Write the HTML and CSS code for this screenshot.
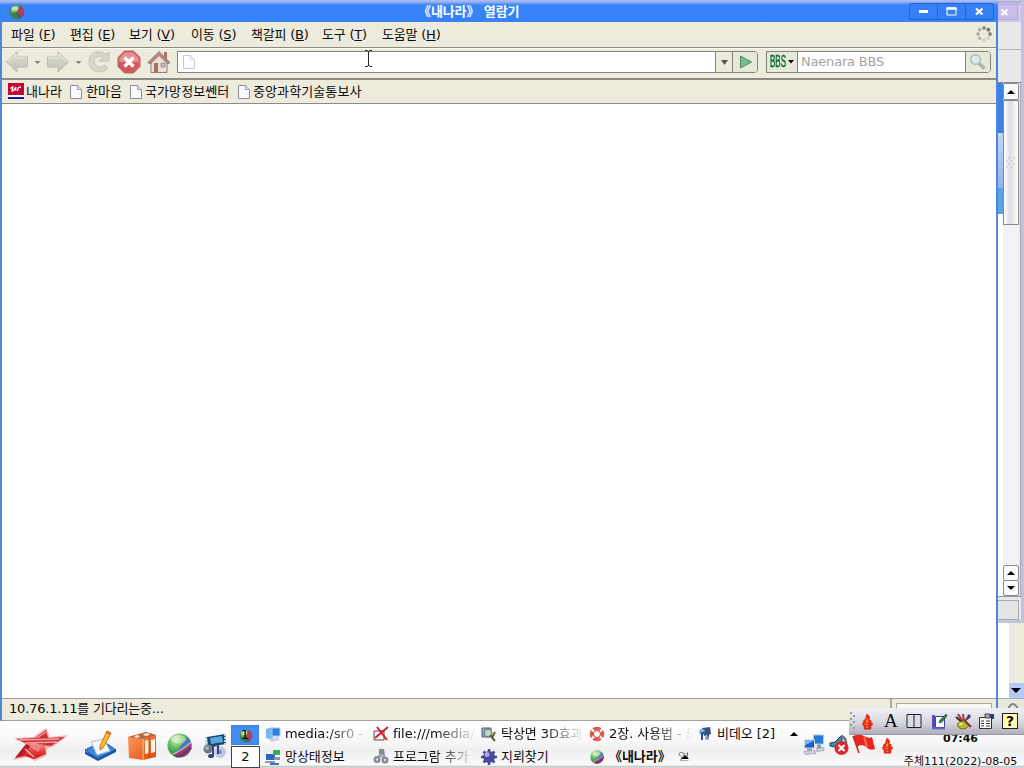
FILE: index.html
```html
<!DOCTYPE html>
<html lang="ko">
<head>
<meta charset="utf-8">
<title>《내나라》 열람기</title>
<link rel="stylesheet" href="styles.css">
</head>
<body>
<svg class="defs" width="0" height="0">
  <defs>
    <radialGradient id="gGreen" cx=".35" cy=".25" r=".8"><stop offset="0" stop-color="#c8f0b0"/><stop offset=".5" stop-color="#58b458"/><stop offset="1" stop-color="#206840"/></radialGradient>
    <linearGradient id="gRed" x1="0" y1="0" x2="0" y2="1"><stop offset="0" stop-color="#f4a0a0"/><stop offset=".5" stop-color="#e04040"/><stop offset="1" stop-color="#d01010"/></linearGradient>
    <linearGradient id="gOrange" x1="0" y1="0" x2="1" y2="1"><stop offset="0" stop-color="#ffa060"/><stop offset="1" stop-color="#e04808"/></linearGradient>
    <linearGradient id="gGrey" x1="0" y1="0" x2="0" y2="1"><stop offset="0" stop-color="#dcdcd0"/><stop offset="1" stop-color="#c0c0b4"/></linearGradient>
    <symbol id="globe" viewBox="0 0 24 24">
      <circle cx="12" cy="12" r="11.500" fill="url(#gGreen)"/>
      <path d="M12 14L20 4A11.500 11.500 0 0 1 23.500 11L8 22z" fill="#5078c0"/>
      <path d="M6 21.500Q14 17 23.500 10Q24 20 15 23Q10 24 6 21.500z" fill="#b03858"/>
      <path d="M5 20.500Q14 17 23 9" stroke="#c8c8e8" stroke-width="1" fill="none"/>
      <path d="M9 23Q17 20 23.500 14" stroke="#384088" stroke-width="1.500" fill="none"/>
      <ellipse cx="11" cy="6" rx="7" ry="4" fill="#fff" opacity=".4"/>
    </symbol>
    <symbol id="globe-small" viewBox="0 0 16 16">
      <circle cx="8" cy="8" r="7.300" fill="#3c8048"/>
      <path d="M8 8L12 2A7.300 7.300 0 0 1 12 14z" fill="#c03858"/>
      <path d="M8 8L9 15L13 13z" fill="#505878"/>
      <path d="M2 5Q5 0 10 1.500L8 8L2 9z" fill="#68b468"/>
      <ellipse cx="6" cy="4.500" rx="3.500" ry="2.300" fill="#fff" opacity=".55"/>
    </symbol>
    <symbol id="page" viewBox="0 0 12 14">
      <path d="M.5.5H7.500L11.500 4.500V13.500H.5z" fill="#fafaff" stroke="#8c8c94"/>
      <path d="M7.500.5V4.500H11.500" fill="#e0e0ea" stroke="#a4a4ae"/>
    </symbol>
    <symbol id="pc" viewBox="0 0 22 22">
      <path d="M10 1h11v10H10z" fill="#b8c8d8"/><path d="M11 2h9v8h-9z" fill="#2878d8"/>
      <path d="M1 6h11v9H1z" fill="#c8d4e0"/><path d="M2 7h9v7H2z" fill="#1860c8"/><path d="M2 7h9L2 12z" fill="#78b8f8"/>
      <path d="M4 15h5v2H4zM14 11h4v4h-4z" fill="#8898a8"/><path d="M1 18l11-1 1 3-11 1zM13 15l8-1v3l-7 1z" fill="#d0d4dc" stroke="#8890a0" stroke-width=".6"/>
    </symbol>
    <symbol id="torch" viewBox="0 0 14 18">
      <path d="M6 0C9 3 11 4 9 7C12 7 12 10 11 12H3C1 9 3 7 5 6C4 4 6 3 6 0z" fill="#e83018"/>
      <path d="M7 5C8 7 7 8 8 10H5C5 8 7 7 7 5z" fill="#ff9820"/>
      <path d="M1 11H13L12 13.500H11V17.500H3V13.500H2z" fill="#dc2818"/><path d="M4 12H8M5 15H8" stroke="#ffa060"/>
    </symbol>
  </defs>
</svg>

<div class="desktop">
  <div class="rear-window">
    <div class="rear-body"></div>
    <div class="rear-scroll"><svg width="15" height="15"><path d="M2 5h10l-5 5z"/></svg></div>
    <div class="rear-status"><svg width="12" height="10"><path d="M2 9V5Q6-1 10 5V9" fill="none" stroke="#888" stroke-width="2"/></svg></div>
  </div>

  <div class="back-window">
    <div class="back-title"><svg width="15" height="15"><path d="M4.500 4.500l6 5.500M10.500 4.500l-6 5.500" stroke="#fff" stroke-width="2"/></svg></div>
    <div class="back-menu"></div>
    <div class="back-tools"></div>
    <div class="back-content">
      <div class="back-view"><i class="sky"></i><i class="haze"></i><i class="sea"></i></div>
      <div class="scrollbar">
        <div class="sb-btn"><svg width="14" height="15"><path d="M3 10h8l-4-4z"/></svg></div>
        <div class="sb-thumb"><svg width="10" height="14"><path d="M2 1h2M7 1h2M0 4h2M5 4h2M2 7h2M7 7h2M0 10h2M5 10h2" stroke="#c0c0c4"/></svg></div>
        <div class="sb-track"></div>
        <div class="sb-btn"><svg width="14" height="15"><path d="M3 9h8l-4-4z"/></svg></div>
        <div class="sb-btn"><svg width="14" height="15"><path d="M3 5h8l-4 4z"/></svg></div>
      </div>
    </div>
    <div class="back-status"><span></span></div>
  </div>

  <div class="window">
    <div class="titlebar">
      <svg class="title-icon" width="16" height="16"><use href="#globe-small"/></svg>
      <div class="title">《내나라》 열람기</div>
      <div class="win-buttons">
        <span><svg width="27" height="15"><path d="M9 7.500h9" stroke="#fff" stroke-width="3"/></svg></span>
        <span><svg width="27" height="15"><path d="M9 4h9v7H9z" fill="none" stroke="#fff"/><path d="M8.500 4.500h10" stroke="#fff" stroke-width="2.500"/></svg></span>
        <span><svg width="27" height="15"><path d="M10 4.500l6.500 6M16.500 4.500l-6.500 6" stroke="#fff" stroke-width="2.200"/></svg></span>
      </div>
    </div>

    <div class="menubar">
      <span class="m1">파일 (<u>F</u>)</span><span class="m2">편집 (<u>E</u>)</span><span class="m3">보기 (<u>V</u>)</span><span class="m4">이동 (<u>S</u>)</span><span class="m5">책갈피 (<u>B</u>)</span><span class="m6">도구 (<u>T</u>)</span><span class="m7">도움말 (<u>H</u>)</span>
      <svg class="throbber" width="18" height="18" fill="#a8a89c"><circle cx="9" cy="3" r="1.900" fill="#8c8c80"/><circle cx="13.300" cy="4.700" r="1.900" fill="#76766a"/><circle cx="15" cy="9" r="1.900" fill="#88887c"/><circle cx="13.300" cy="13.300" r="1.700" fill="#d0d0c4"/><circle cx="9" cy="15" r="1.700" fill="#ccccc0"/><circle cx="4.700" cy="13.300" r="1.700" fill="#b4b4a8"/><circle cx="3" cy="9" r="1.700"/><circle cx="4.700" cy="4.700" r="1.700"/></svg>
    </div>

    <div class="toolbar">
      <svg class="ic-back" width="24" height="24"><path d="M1.500 12L12 2V7H22.500V17H12V22z" fill="url(#gGrey)" stroke="#bcbcb0"/><path d="M3 12l8-8v4h10" fill="none" stroke="#eeeee4"/></svg>
      <svg class="caret" width="7" height="5"><path d="M.5 1h6l-3 3z" fill="#84847a"/></svg>
      <svg class="ic-fwd" width="24" height="24"><path d="M22.500 12L12 2V7H1.500V17H12V22z" fill="url(#gGrey)" stroke="#bcbcb0"/><path d="M2 8h11V4l8 8" fill="none" stroke="#eeeee4"/></svg>
      <svg class="caret" width="7" height="5"><path d="M.5 1h6l-3 3z" fill="#84847a"/></svg>
      <svg class="ic-reload" width="24" height="24"><path d="M22 2V11H12L16 7.500C10 4 4 11 9 15Q13 19 18 15L21 18C15 25 2 22 2 12C2 2 13-1 19 4.500z" fill="#d6d6ca" stroke="#c4c4b8"/></svg>
      <svg class="ic-stop" width="24" height="24"><path d="M7.500 1h9L23 7.500v9L16.500 23h-9L1 16.500v-9z" fill="#d4585c" stroke="#a87070"/><path d="M8 2.500h8L21.500 8v4H2.500V8z" fill="#e89090"/><path d="M7.500 7.500l9 9M16.500 7.500l-9 9" stroke="#fff" stroke-width="3.500"/></svg>
      <svg class="ic-home" width="24" height="24"><path d="M17 2h3v8h-3z" fill="#b07068"/><path d="M4 12v10.500h16V12l-8-8z" fill="#f0ddd4" stroke="#948078"/><path d="M1 12.500L12 1.500l11 11-2 1.500-9-8.500L3 14z" fill="#b88c84" stroke="#8c6c64" stroke-width=".8"/><path d="M7 13h4v9.500H7z" fill="#a07468"/><path d="M14 13h4v4h-4z" fill="#b4c0cc" stroke="#948078" stroke-width=".7"/></svg>
      <div class="urlbar">
        <svg class="url-page" width="12" height="14"><use href="#page"/></svg>
        <span class="url-drop"><svg width="9" height="7"><path d="M1 1h7l-3.500 5z" fill="#555"/></svg></span>
        <span class="url-go"><svg width="14" height="14"><path d="M1.500 1L12.500 7L1.500 13z" fill="#78bc90" stroke="#4c8c64"/></svg></span>
      </div>
      <div class="search">
        <span class="engine"><b>BBS</b><svg width="6" height="4"><path d="M0 0h6l-3 3.500z"/></svg></span>
        <span class="query">Naenara BBS</span>
        <span class="find"><svg width="18" height="18"><path d="M10 10l5.500 5.500" stroke="#999" stroke-width="3"/><path d="M10.500 10l5 5" stroke="#e0e0e0"/><circle cx="6.500" cy="6.500" r="4.800" fill="#dce8ec" stroke="#b4b8b8" stroke-width="1.400"/></svg></span>
      </div>
    </div>

    <div class="bookmarks">
      <span class="b1"><svg width="16" height="16"><path d="M0 0h16v12H0z" fill="#c00838"/><path d="M0 12h16v2H0z" fill="#fff"/><path d="M0 14h16v2H0z" fill="#1818a0"/><path d="M2.500 5.500Q4 4 5 4L4 8Q6 8 8 4L7.500 7.500M9 8L11 4Q11 5 13 3.500" fill="none" stroke="#fff" stroke-width="1.300"/></svg>내나라</span>
      <span class="b2"><svg width="12" height="14"><use href="#page"/></svg>한마음</span>
      <span class="b3"><svg width="12" height="14"><use href="#page"/></svg>국가망정보쎈터</span>
      <span class="b4"><svg width="12" height="14"><use href="#page"/></svg>중앙과학기술통보사</span>
    </div>
    <div class="content"></div>
    <div class="statusbar"><span class="status-text">10.76.1.11를 기다리는중...</span><span class="progress"><i></i></span></div>
    <svg class="cursor" width="9" height="19"><path d="M1 1.500h2l1.500 1 1.500-1h2M4.500 2v15M1 17.500h2l1.500-1 1.500 1h2" fill="none" stroke="#222"/></svg>
  </div>

  <div class="panel">
    <svg class="star" width="58" height="34" viewBox="0 0 58 34">
      <path d="M3 10L22 9L35 0L39 9L57 7L43 18L36 21L35 28L24 33L17 29L2 32L12 21L15 16z" fill="#f6b4b0"/>
      <path d="M5 11L24 10L35 2L37 10L54 9L40 18L16 16z" fill="#cc3038"/>
      <path d="M8 12L48 11M14 15L46 14M26 10L35 4" stroke="#f4a0a0" stroke-width="1.300"/>
      <path d="M15 16L4 30L14 28L23 31L35 26L34 18L24 15z" fill="url(#gRed)"/><path d="M15 16L4 30L11 28L20 18z" fill="#b81c28"/><path d="M18 18L32 16L27 24z" fill="#ee8080"/><path d="M14 21L23 29" stroke="#f6b4b0" stroke-width="1.500"/>
    </svg>
    <div class="launch">
      <svg width="34" height="32" viewBox="0 0 34 32"><path d="M2 20L20 11L33 20L15 29z" fill="#3888d8" stroke="#1858a8"/><path d="M2 21v3l13 7 18-9v-3L15 28z" fill="#1858a8"/><path d="M8 12L21 9l6 12-13 4z" fill="#f4f8ff" stroke="#a8bcd8"/><path d="M24 1l4 2-8 15-3 2v-4z" fill="#ffb828" stroke="#c87810"/><path d="M24 1l4 2-1 2-4-2z" fill="#e86048"/></svg>
      <svg width="30" height="30" viewBox="0 0 30 30"><path d="M1 6L19 1l10 3v22L16 29 2 27z" fill="url(#gOrange)"/><path d="M1 6L19 1l10 3-13 4z" fill="#b86848"/><path d="M7 5l4-1 2 2-4 1zM16 3l5-1 2 2-5 1z" fill="#fce8d0"/><path d="M16 8v21" stroke="#ffc090"/><path d="M18 10l4-1v13l-4 1zM24 9l4-1v13l-4 1z" fill="#fff4e8"/><path d="M22 6v21" stroke="#c83808"/></svg>
      <svg width="25" height="25"><use href="#globe"/></svg>
      <svg width="26" height="28" viewBox="0 0 26 28"><path d="M5 5L23 2l1 10-18 3z" fill="#184870"/><path d="M8 6l12-2 1 6-12 2z" fill="#58a8d8"/><path d="M4 5v12M23 2v11" stroke="#b8d4e8" stroke-width="2" stroke-dasharray="2 1"/><circle cx="6" cy="17" r="4.500" fill="#707880"/><circle cx="5" cy="16" r="2" fill="#a8b0b8"/><circle cx="18" cy="20" r="6" fill="#c0c8ec"/><circle cx="18" cy="20" r="2" fill="#8090d0"/><path d="M11 24V14l5-1v9" fill="none" stroke="#384878" stroke-width="2"/><ellipse cx="9" cy="24" rx="3" ry="2" fill="#304878"/></svg>
    </div>
    <div class="pager">
      <span class="on"><svg width="14" height="14"><use href="#globe-small"/></svg><b>1</b></span><span>2</span>
    </div>
    <div class="tasks">
      <div class="task"><svg width="16" height="16"><path d="M1 3l7-2v13l-7-2z" fill="#78b8f0"/><path d="M7 2h8v8H7z" fill="#2880e0" stroke="#b0c8e0"/><path d="M4 13l9-2 2 3-9 2z" fill="#c8d4e4"/></svg><span class="fade">media:/sr0 -</span></div>
      <div class="task"><svg width="16" height="16"><path d="M1 5h10v9H1z" fill="#f4f4f4" stroke="#605050"/><path d="M4 1l10 13M15 1L2 12" stroke="#d81c30" stroke-width="2"/></svg><span class="fade">file:///media/i</span></div>
      <div class="task"><svg width="16" height="16"><path d="M1 2h9v9H1z" fill="#98a8c8" stroke="#506088"/><circle cx="7" cy="7" r="4" fill="#b8d8c8" stroke="#607068"/><path d="M9 9l5 6M14 6l-3 6" stroke="#606820" stroke-width="2"/></svg><span class="fade">탁상면 3D효과</span></div>
      <div class="task"><svg width="16" height="16"><circle cx="8" cy="8" r="5.500" fill="#fff" stroke="#e05850" stroke-width="3.500"/><path d="M2.500 3l3 3M13.500 3l-3 3M2.500 13l3-3M13.500 13l-3-3" stroke="#fff" stroke-width="2"/><circle cx="8" cy="8" r="3.500" fill="#fff" stroke="#b84040"/></svg><span class="fade">2장. 사용법 - 도</span></div>
      <div class="task wide"><svg width="14" height="16"><path d="M4 2l8-1 1 7-7 2z" fill="#285888"/><circle cx="4" cy="6" r="3" fill="#78b8e8"/><path d="M4 14V7l6-1v6" fill="none" stroke="#385078" stroke-width="2"/><circle cx="9" cy="12" r="2" fill="#8098c0"/></svg><span>비데오 [2]</span><svg class="up" width="8" height="4"><path d="M0 4h8L4 0z"/></svg></div>
      <div class="task"><svg width="16" height="16"><path d="M1 5h9v6H1z" fill="#2868c0"/><path d="M8 1h7v5H8z" fill="#38b050"/><path d="M0 12h10v2H0zM9 8h6v3H9z" fill="#8898b0"/><path d="M5 15h9" stroke="#4070b0" stroke-width="2"/></svg><span>망상태정보</span></div>
      <div class="task"><svg width="16" height="16" fill="#848898"><path d="M6 0h5l1 7H6z"/><path d="M3 8l4-3h3l3 4z" fill="#a4a8b4"/><circle cx="4" cy="10.500" r="3.500"/><circle cx="12" cy="11" r="3.500"/><circle cx="4" cy="10.500" r="1.200" fill="#ddd"/><circle cx="12" cy="11" r="1.200" fill="#ddd"/></svg><span class="fade">프로그람 추가</span></div>
      <div class="task"><svg width="16" height="16"><path d="M8 0v16M0 8h16M2.500 2.500l11 11M13.500 2.500l-11 11" stroke="#484888" stroke-width="2.500"/><circle cx="8" cy="8" r="6" fill="#4848a0"/><circle cx="6" cy="5.500" r="2.500" fill="#a8a8e8"/></svg><span>지뢰찾기</span></div>
      <div class="task active"><svg width="16" height="14"><use href="#globe"/></svg><span><b>《내나라》</b></span><span class="cut">열</span><svg class="up2" width="8" height="4"><path d="M0 4h8L4 0z"/></svg></div>
    </div>
    <div class="tray">
      <svg width="22" height="23"><use href="#pc"/></svg>
      <svg width="20" height="24"><path d="M1 10l5-1 7-7v17l-7-5-5-1z" fill="#3890a8" stroke="#184858"/><path d="M12 3q6 2 5 10" fill="none" stroke="#687888" stroke-width="2.500"/><circle cx="12.500" cy="15" r="7" fill="#d82830"/><path d="M9.500 12l6 6M15.500 12l-6 6" stroke="#fff" stroke-width="2"/></svg>
      <svg width="24" height="22"><path d="M1 3Q7 0 12 3T20 4L23 16Q18 18 14 14T5 14z" fill="#ec2420"/><path d="M1 3l6 17" stroke="#c02820" stroke-width="1.500"/><path d="M12 4l3 10" stroke="#ff7060" stroke-width="2"/></svg>
      <svg width="13" height="17"><use href="#torch"/></svg>
    </div>
    <div class="clock"><b>07:46</b><span>주체111(2022)-08-05</span></div>
  </div>

  <div class="ime">
    <svg width="7" height="20" fill="#9898a0"><path d="M1 1h2v2H1zM4 4h2v2H4zM1 7h2v2H1zM4 10h2v2H4zM1 13h2v2H1zM4 16h2v2H4z"/></svg>
    <svg class="i-torch" width="13" height="17"><use href="#torch"/></svg>
    <span class="i-a">A</span>
    <svg class="i-book" width="16" height="16"><path d="M1 1.500h14v13H1zM8 1.500v13" fill="#dcdce6" stroke="#202028"/></svg>
    <svg class="i-note" width="17" height="17"><path d="M1 2h3v13H1z" fill="#5050b8"/><path d="M4.500 3.500h9v11h-9z" fill="#fff" stroke="#4040a8"/><path d="M15 1l-6 6-1 3 3-1 5-6z" fill="#388050" stroke="#203830" stroke-width=".6"/><path d="M1 15.500h13" stroke="#6868d0" stroke-width="2"/></svg>
    <svg class="i-pot" width="17" height="17"><path d="M3 1l5 8M8 1l1 8M15 2L9 9" stroke="#a83838" stroke-width="2"/><path d="M1 4l6 5" stroke="#282828" stroke-width="2"/><ellipse cx="8" cy="12" rx="5.500" ry="4" fill="#b8b830" stroke="#707018"/><path d="M13 1l3 3-4 3" fill="#283898"/><path d="M10 8l6 6" stroke="#883030" stroke-width="2"/><ellipse cx="6" cy="11" rx="2" ry="1" fill="#f0f0a0"/></svg>
    <svg class="i-list" width="17" height="17"><path d="M1.500 4.500h12v11h-12z" fill="#fff" stroke="#303030"/><path d="M3 8h3M8 8h4M3 10.500h3M8 10.500h4M3 13h3M8 13h4" stroke="#303030"/><path d="M7 1h5v4H7z" fill="#aaa" stroke="#404040"/><path d="M12 1h4v5h-2l-2-2z" fill="#284078"/></svg>
    <span class="i-help">?</span>
  </div>
</div>
</body>
</html>
```

FILE: styles.css
```css
* { box-sizing: border-box; }
body { margin: 0; overflow: hidden; font: 13px/16px "DejaVu Sans", "Noto Sans CJK KR", sans-serif; color: #0c0c0c; }
svg { display: block; flex: none; }
.defs { position: absolute; }
.desktop { position: relative; width: 1024px; height: 768px; overflow: hidden; background: #fff; white-space: nowrap; }

.rear-window { position: absolute; left: 998px; top: 0; width: 26px; height: 720px; background: linear-gradient(90deg, #fff 11px, #ecebdc 11px); display: flex; flex-direction: column; }
.rear-body { height: 683px; }
.rear-scroll { height: 15px; margin-left: 11px; background: #b8c8f8; }
.rear-status { flex: 1; border-top: 1px solid #aaa; background: #e8e7dc; padding: 3px 0 0 9px; }

.back-window { position: absolute; left: 900px; top: 0; width: 124px; height: 623px; background: #e8e7ea; border-right: 3px solid #c2c2dc; border-bottom: 3px solid #c4c8dc; display: flex; flex-direction: column; }
.back-title { height: 22px; padding: 3px 0 0 96px; background: linear-gradient(#a8a8d0, #d4ccf0 5px, #cdc3ec); border-top: 1px solid #c8c8e0; }
.back-title svg { width: 22px; height: 16px; border: 1px solid #b4a8dc; border-left: 0; border-radius: 0 2px 2px 0; background: #c9bdec; padding-left: 1px; }
.back-menu { height: 28px; border-bottom: 1px solid #b8b8c0; }
.back-tools { height: 33px; border-bottom: 1px solid #888; }
.back-content { height: 513px; display: flex; padding-left: 98px; border-right: 1px solid #aaa; }
.back-view { width: 5px; background: #fff; display: flex; flex-direction: column; }
.back-view i { display: block; }
.sky { height: 50px; background: #3a84e0; }
.haze { height: 55px; background: linear-gradient(#c0d8f4, #90b4e8); }
.sea { height: 26px; background: #58a4e0; }
.scrollbar { width: 16px; display: flex; flex-direction: column; background: #f2f2f4; }
.sb-btn { height: 16px; border: 1px solid #8c8c90; background: #fbfbfb; border-radius: 2px; flex: none; }
.sb-btn:first-child { height: 17px; }
.sb-thumb { height: 125px; border: 1px solid #888; background: linear-gradient(90deg, #fff, #dedede 6px, #fff); padding: 56px 0 0 2px; }
.sb-track { flex: 1; }
.sb-track + .sb-btn { margin-bottom: -1px; }
.back-status { flex: 1; border-top: 1px solid #999; padding: 3px 2px 0 98px; }
.back-status span { display: block; height: 20px; border: 1px solid #aaa; border-left: 0; background: #e4e3e8; }

.window { position: absolute; left: 0; top: 0; width: 998px; height: 721px; background: #ecebdc; border: solid #4f86dc; border-width: 0 2px 1px; border-bottom-color: #a0a09c; display: flex; flex-direction: column; }
.titlebar { height: 22px; flex: none; margin: 0 -2px; background: linear-gradient(#b8bcec 0, #90b0f4 2px, #3884f8 5px, #3482fc 20px, #4484e4); display: flex; align-items: flex-start; }
.title-icon { margin: 4px 0 0 9px; }
.title { width: 121px; margin: 4px 0 0 394px; color: #fff; font-weight: bold; letter-spacing: -.1px; text-indent: -1px; }
.win-buttons { display: flex; margin: 3px 0 0 369px; border: 1px solid #2464d4; border-radius: 2px; background: #3480f4; }
.win-buttons span { width: 28px; height: 15px; border-right: 1px solid #2464d4; }
.win-buttons span:last-child { border: 0; width: 27px; }
.menubar { height: 26px; flex: none; display: flex; align-items: center; border-bottom: 1px solid #8c8c86; padding: 1px 0 0 9px; }
.menubar span { letter-spacing: -.2px; }
.m1 { width: 59px; } .m2 { width: 59px; } .m3 { width: 62px; } .m4 { width: 60px; } .m5 { width: 71px; } .m6 { width: 60px; } .m7 { width: 60px; }
.throbber { margin-left: auto; margin-right: 3px; margin-top: -2px; }
.toolbar { height: 32px; flex: none; display: flex; align-items: center; border-top: 1px solid #fcfcf4; border-bottom: 2px solid #8c8c86; padding: 0 0 3px 3px; }
.toolbar .caret { margin: 0 5px; }
.ic-reload, .ic-stop, .ic-home { margin-right: 6px; }
.urlbar { width: 581px; height: 22px; flex: none; border: 1px solid #84847e; border-radius: 0 4px 4px 0; background: #fff; display: flex; align-items: center; }
.url-page { margin: 0 auto 0 5px; opacity: .45; }
.url-drop { width: 17px; height: 20px; background: #ecebdc; border-left: 1px solid #84847e; padding: 7px 0 0 4px; }
.url-go { width: 25px; height: 20px; background: #e6e9d8; border-left: 1px solid #84847e; border-radius: 0 3px 3px 0; padding: 3px 0 0 6px; }
.search { width: 225px; height: 22px; flex: none; margin-left: 8px; border: 1px solid #84847e; border-radius: 0 4px 4px 0; background: #fff; display: flex; }
.engine { width: 31px; display: flex; align-items: center; background: #e6e9d8; border-right: 1px solid #84847e; padding-left: 3px; }
.engine b { width: 19px; font: 16px/20px "Liberation Sans", sans-serif; color: #0c6838; -webkit-text-stroke: .5px #0c6838; transform: scaleX(.5); transform-origin: 0 50%; }
.engine svg { margin-left: -1px; }
.query { width: 167px; line-height: 20px; padding-left: 3px; color: #a4a4a4; letter-spacing: -.2px; }
.find { width: 25px; background: #e6e9d8; border-left: 1px solid #84847e; padding: 1px 0 0 3px; border-radius: 0 3px 3px 0; }
.bookmarks { height: 24px; flex: none; display: flex; align-items: center; border-bottom: 1px solid #8c8c86; padding-top: 1px; letter-spacing: .1px; }
.bookmarks span { display: flex; align-items: center; }
.bookmarks svg { margin-top: -1px; }
.b1 { width: 68px; padding-left: 6px; gap: 2px; } .b2 { width: 60px; gap: 4px; } .b3 { width: 108px; gap: 3px; } .b4 { gap: 3px; }
.bookmarks .b1 svg { margin-top: -3px; }
.content { flex: 1; background: #fff; border-bottom: 1px solid #9c9c98; }
.statusbar { height: 21px; flex: none; display: flex; align-items: center; }
.status-text { width: 888px; padding-left: 7px; letter-spacing: -.2px; margin-top: -1px; }
.progress { flex: 1; height: 21px; border-left: 2px solid #a8a89c; padding: 4px 4px 0; }
.progress i { display: block; height: 17px; border: 1px solid #a8a89c; background: #fafaf4; }
.cursor { position: absolute; left: 362px; top: 49px; }

.panel { position: absolute; left: 0; top: 721px; width: 1024px; height: 47px; display: flex; background: linear-gradient(#fff, #f8f8f8 20px, #efefef 28px, #fafafa 44px, #bbb 46px, #eee); }
.star { margin: 7px 14px 0 11px; }
.launch { width: 149px; display: flex; align-items: center; gap: 10px; padding-top: 2px; }
.pager { width: 29px; padding-top: 4px; text-align: center; margin-left: -1px; }
.pager span { position: relative; display: block; height: 22px; border: 1px solid #444; line-height: 20px; background: #fff; }
.pager .on { height: 20px; border-color: #3c80e8; background: #448cf4; margin-bottom: 1px; line-height: 18px; width: 28px; }
.pager .on svg { position: absolute; left: 7px; top: 3px; }
.pager .on b { position: relative; font-weight: normal; }
.tasks { width: 542px; padding: 2px 0 0 5px; display: grid; grid-template-columns: repeat(4, 108px) 105px; grid-template-rows: 22px 23px; }
.task { display: flex; align-items: center; gap: 4px; min-width: 0; }
.task span { letter-spacing: -.05px; }
.task .fade { width: 84px; overflow: hidden; -webkit-mask-image: linear-gradient(90deg, #000 50%, transparent); mask-image: linear-gradient(90deg, #000 50%, transparent); }
.up { margin-left: 10px; }
.wide { padding-left: 1px; gap: 5px; }
.task .cut { width: 13px; height: 16px; opacity: .55; transform: scaleY(.7); margin-left: 3px; }
.up2 { margin-left: -14px; }
.tray { width: 94px; display: flex; padding: 12px 0 0 0; gap: 4px; margin-left: 1px; }
.tray svg:nth-child(3) { margin-left: -1px; }
.tray svg:nth-child(4) { margin-top: 4px; margin-left: 1px; }
.clock { flex: 1; display: flex; flex-direction: column; align-items: center; font-size: 11px; line-height: 14px; padding-top: 11px; gap: 9px; }
.clock span { letter-spacing: -.02px; }

.ime { position: absolute; left: 849px; top: 708px; width: 175px; height: 27px; display: flex; align-items: center; background: linear-gradient(#f0f0f4, #d8d8e0 14px, #b0b0bc); border-bottom: 1px solid #9898a0; }
.i-torch { margin-left: 5px; }
.i-a { width: 17px; margin-left: 10px; font: 19px/22px "Liberation Serif", serif; }
.i-book { margin-left: 5px; }
.i-note { margin-left: 9px; }
.i-pot { margin-left: 7px; }
.i-list { margin-left: 6px; }
.i-help { width: 16px; height: 16px; margin-left: 7px; border: 1px solid #202020; background: #fcfcb0; text-align: center; font: bold 14px/15px "DejaVu Sans", sans-serif; }
```
